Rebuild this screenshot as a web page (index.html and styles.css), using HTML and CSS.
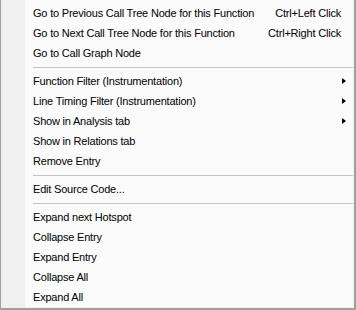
FILE: index.html
```html
<!DOCTYPE html>
<html lang="en">
<head>
    <meta charset="UTF-8">
    <meta name="viewport" content="width=device-width, initial-scale=1.0">
    <title>Context Menu</title>
    <link rel="stylesheet" href="styles.css">
</head>
<body>
    <div class="menu">
        <div class="menu-inner">
            <div class="item"><span class="label">Go to Previous Call Tree Node for this Function</span><span class="shortcut">Ctrl+Left Click</span></div>
            <div class="item"><span class="label">Go to Next Call Tree Node for this Function</span><span class="shortcut">Ctrl+Right Click</span></div>
            <div class="item"><span class="label">Go to Call Graph Node</span></div>

            <div class="separator"></div>

            <div class="item"><span class="label">Function Filter (Instrumentation)</span><span class="arrow"></span></div>
            <div class="item"><span class="label">Line Timing Filter (Instrumentation)</span><span class="arrow"></span></div>
            <div class="item"><span class="label">Show in Analysis tab</span><span class="arrow"></span></div>
            <div class="item"><span class="label">Show in Relations tab</span></div>
            <div class="item"><span class="label">Remove Entry</span></div>

            <div class="separator"></div>

            <div class="item"><span class="label">Edit Source Code...</span></div>

            <div class="separator"></div>

            <div class="item"><span class="label">Expand next Hotspot</span></div>
            <div class="item"><span class="label">Collapse Entry</span></div>
            <div class="item"><span class="label">Expand Entry</span></div>
            <div class="item"><span class="label">Collapse All</span></div>
            <div class="item"><span class="label">Expand All</span></div>
        </div>
    </div>
</body>
</html>
```

FILE: styles.css
```css
body {
    margin: 0;
    background-color: #ffffff;
    font-family: "Liberation Sans", Arial, sans-serif;
    font-size: 11px;
    letter-spacing: -0.2px;
    color: #000;
}

.menu {
    width: 356px;
    height: 310px;
    box-sizing: border-box;
    border-left: 1px solid #a0a0a0;
    border-right: 2px solid #a0a0a0;
    border-bottom: 2px solid #a0a0a0;
}

.menu-inner {
    height: 100%;
    box-sizing: border-box;
    padding-top: 3px;
    border-right: 1px solid #f0f0f0;
    border-bottom: 1px solid #f0f0f0;
    background: linear-gradient(to right, #f0f0f0 24px, #fbfbfb 24px);
}

.item {
    display: flex;
    align-items: center;
    height: 20px;
    padding-left: 32px;
    white-space: nowrap;
}

.shortcut {
    margin-left: auto;
    padding-right: 12px;
}

.arrow {
    margin-left: auto;
    margin-right: 7px;
    width: 0;
    height: 0;
    border-top: 3.5px solid transparent;
    border-bottom: 3.5px solid transparent;
    border-left: 4px solid #000;
}

.separator {
    height: 8px;
    box-sizing: border-box;
    padding-top: 4px;
    margin-left: 32px;
}

.separator::after {
    content: "";
    display: block;
    height: 1px;
    background-color: #c5c5c5;
}
```
